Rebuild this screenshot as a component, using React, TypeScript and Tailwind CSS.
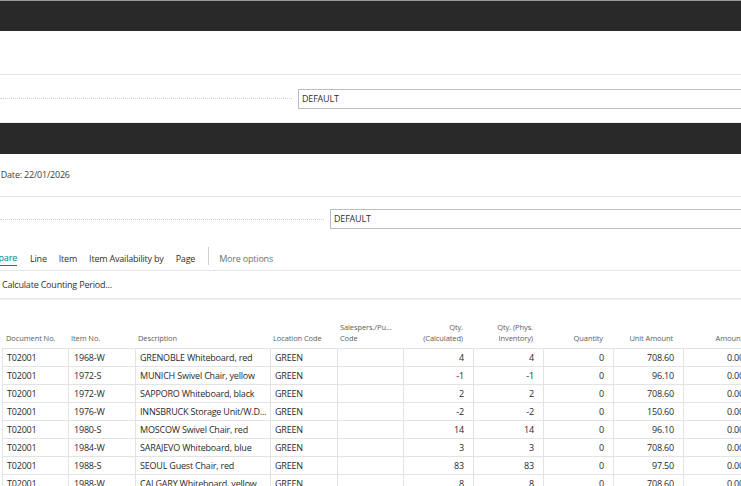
import React from "react";

type Row = {
  doc: string;
  item: string;
  desc: string;
  loc: string;
  calc: string;
  phys: string;
  qty: string;
  unit: string;
  amount: string;
};

const rows: Row[] = [
  { doc: "T02001", item: "1968-W", desc: "GRENOBLE Whiteboard, red", loc: "GREEN", calc: "4", phys: "4", qty: "0", unit: "708.60", amount: "0.00" },
  { doc: "T02001", item: "1972-S", desc: "MUNICH Swivel Chair, yellow", loc: "GREEN", calc: "-1", phys: "-1", qty: "0", unit: "96.10", amount: "0.00" },
  { doc: "T02001", item: "1972-W", desc: "SAPPORO Whiteboard, black", loc: "GREEN", calc: "2", phys: "2", qty: "0", unit: "708.60", amount: "0.00" },
  { doc: "T02001", item: "1976-W", desc: "INNSBRUCK Storage Unit/W.D...", loc: "GREEN", calc: "-2", phys: "-2", qty: "0", unit: "150.60", amount: "0.00" },
  { doc: "T02001", item: "1980-S", desc: "MOSCOW Swivel Chair, red", loc: "GREEN", calc: "14", phys: "14", qty: "0", unit: "96.10", amount: "0.00" },
  { doc: "T02001", item: "1984-W", desc: "SARAJEVO Whiteboard, blue", loc: "GREEN", calc: "3", phys: "3", qty: "0", unit: "708.60", amount: "0.00" },
  { doc: "T02001", item: "1988-S", desc: "SEOUL Guest Chair, red", loc: "GREEN", calc: "83", phys: "83", qty: "0", unit: "97.50", amount: "0.00" },
  { doc: "T02001", item: "1988-W", desc: "CALGARY Whiteboard, yellow", loc: "GREEN", calc: "8", phys: "8", qty: "0", unit: "708.60", amount: "0.00" },
];

const cols = "grid grid-cols-[65px_67px_135px_67px_66px_70px_70px_70px_70px_70px]";

function DefaultField({ dots }: { dots: string }) {
  return (
    <div className="flex items-center">
      <div className={`${dots} border-b border-dotted border-[#cfcfcf]`} />
      <div className="ml-[6px] flex-1 h-[20px] border border-r-0 border-[#bdbdbd] flex items-center pl-[3px] text-[9px] tracking-[-0.2px] text-[#303030]">
        DEFAULT
      </div>
    </div>
  );
}

function Head({ top, bottom, right }: { top?: string; bottom: string; right?: boolean }) {
  return (
    <div className={`flex flex-col justify-end pb-[4px] leading-[11px] ${right ? "items-end pr-[9px]" : "pl-[4px]"}`}>
      {top && <span className="whitespace-nowrap">{top}</span>}
      <span className="whitespace-nowrap">{bottom}</span>
    </div>
  );
}

export default function App() {
  return (
    <div className="w-[741px] h-[486px] overflow-hidden bg-white text-[#2a2a2a] font-['Open_Sans',sans-serif]">
      <div className="h-px bg-[#9a9a9a]" />
      <div className="h-[30px] bg-[#292929]" />
      <div className="h-[44px] border-b border-[#e6e6e6]" />
      <div className="h-[47px] flex flex-col justify-center">
        <DefaultField dots="w-[292px]" />
      </div>
      <div className="h-[32px] bg-[#292929] border-t border-[#ececec]" />

      <div className="h-[43px] border-b border-[#e6e6e6] flex items-center overflow-hidden text-[9px] tracking-[-0.2px] text-[#404040]">
        <span className="-ml-[31px] whitespace-nowrap">Posting Date: 22/01/2026</span>
      </div>
      <div className="h-[44px] flex flex-col justify-center">
        <DefaultField dots="w-[324px]" />
      </div>

      <div className="h-[30px] border-b border-[#e6e6e6] flex items-end pb-[4px] overflow-hidden text-[9px] tracking-[-0.2px] text-[#303030]">
        <span className="-ml-[15px] whitespace-nowrap border-b border-[#00838a] text-[#00838a] leading-[14px]">Prepare</span>
        <span className="ml-[13px] leading-[14px]">Line</span>
        <span className="ml-[12px] leading-[14px]">Item</span>
        <span className="ml-[12px] leading-[14px] whitespace-nowrap">Item Availability by</span>
        <span className="ml-[12px] leading-[14px]">Page</span>
        <span className="ml-[13px] w-px h-[18px] bg-[#d0d0d0] self-center mt-[4px]" />
        <span className="ml-[10px] leading-[14px] text-[#707070] whitespace-nowrap">More options</span>
      </div>
      <div className="h-[29px] border-b-2 border-[#ececec] flex items-center pl-[2px] text-[9px] tracking-[-0.2px] text-[#303030]">
        Calculate Counting Period...
      </div>

      <div className="h-[22px]" />

      <div className="pl-[2px]">
        <div className={`${cols} h-[27px] border-b border-[#e3e3e3] text-[7.5px] tracking-[-0.1px] text-[#606060]`}>
          <Head bottom="Document No." />
          <Head bottom="Item No." />
          <Head bottom="Description" />
          <Head bottom="Location Code" />
          <Head top="Salespers./Pu..." bottom="Code" />
          <Head top="Qty." bottom="(Calculated)" right />
          <Head top="Qty. (Phys." bottom="Inventory)" right />
          <Head bottom="Quantity" right />
          <Head bottom="Unit Amount" right />
          <Head bottom="Amount" right />
        </div>
        {rows.map((r, i) => (
          <div key={i} className={`${cols} h-[18px] border-b border-l border-[#e3e3e3] text-[9px] tracking-[-0.2px]`}>
            <div className="pl-[4px] flex items-center">{r.doc}</div>
            <div className="pl-[5px] flex items-center border-l border-[#e3e3e3]">{r.item}</div>
            <div className="pl-[4px] flex items-center border-l border-[#e3e3e3] whitespace-nowrap overflow-hidden">{r.desc}</div>
            <div className="pl-[4px] flex items-center border-l border-[#e3e3e3]">{r.loc}</div>
            <div className="border-l border-[#e3e3e3]" />
            <div className="pr-[9px] flex items-center justify-end border-l border-[#e3e3e3]">{r.calc}</div>
            <div className="pr-[9px] flex items-center justify-end border-l border-[#e3e3e3]">{r.phys}</div>
            <div className="pr-[9px] flex items-center justify-end border-l border-[#e3e3e3]">{r.qty}</div>
            <div className="pr-[9px] flex items-center justify-end border-l border-[#e3e3e3]">{r.unit}</div>
            <div className="pr-[9px] flex items-center justify-end border-l border-[#e3e3e3]">{r.amount}</div>
          </div>
        ))}
      </div>
    </div>
  );
}
